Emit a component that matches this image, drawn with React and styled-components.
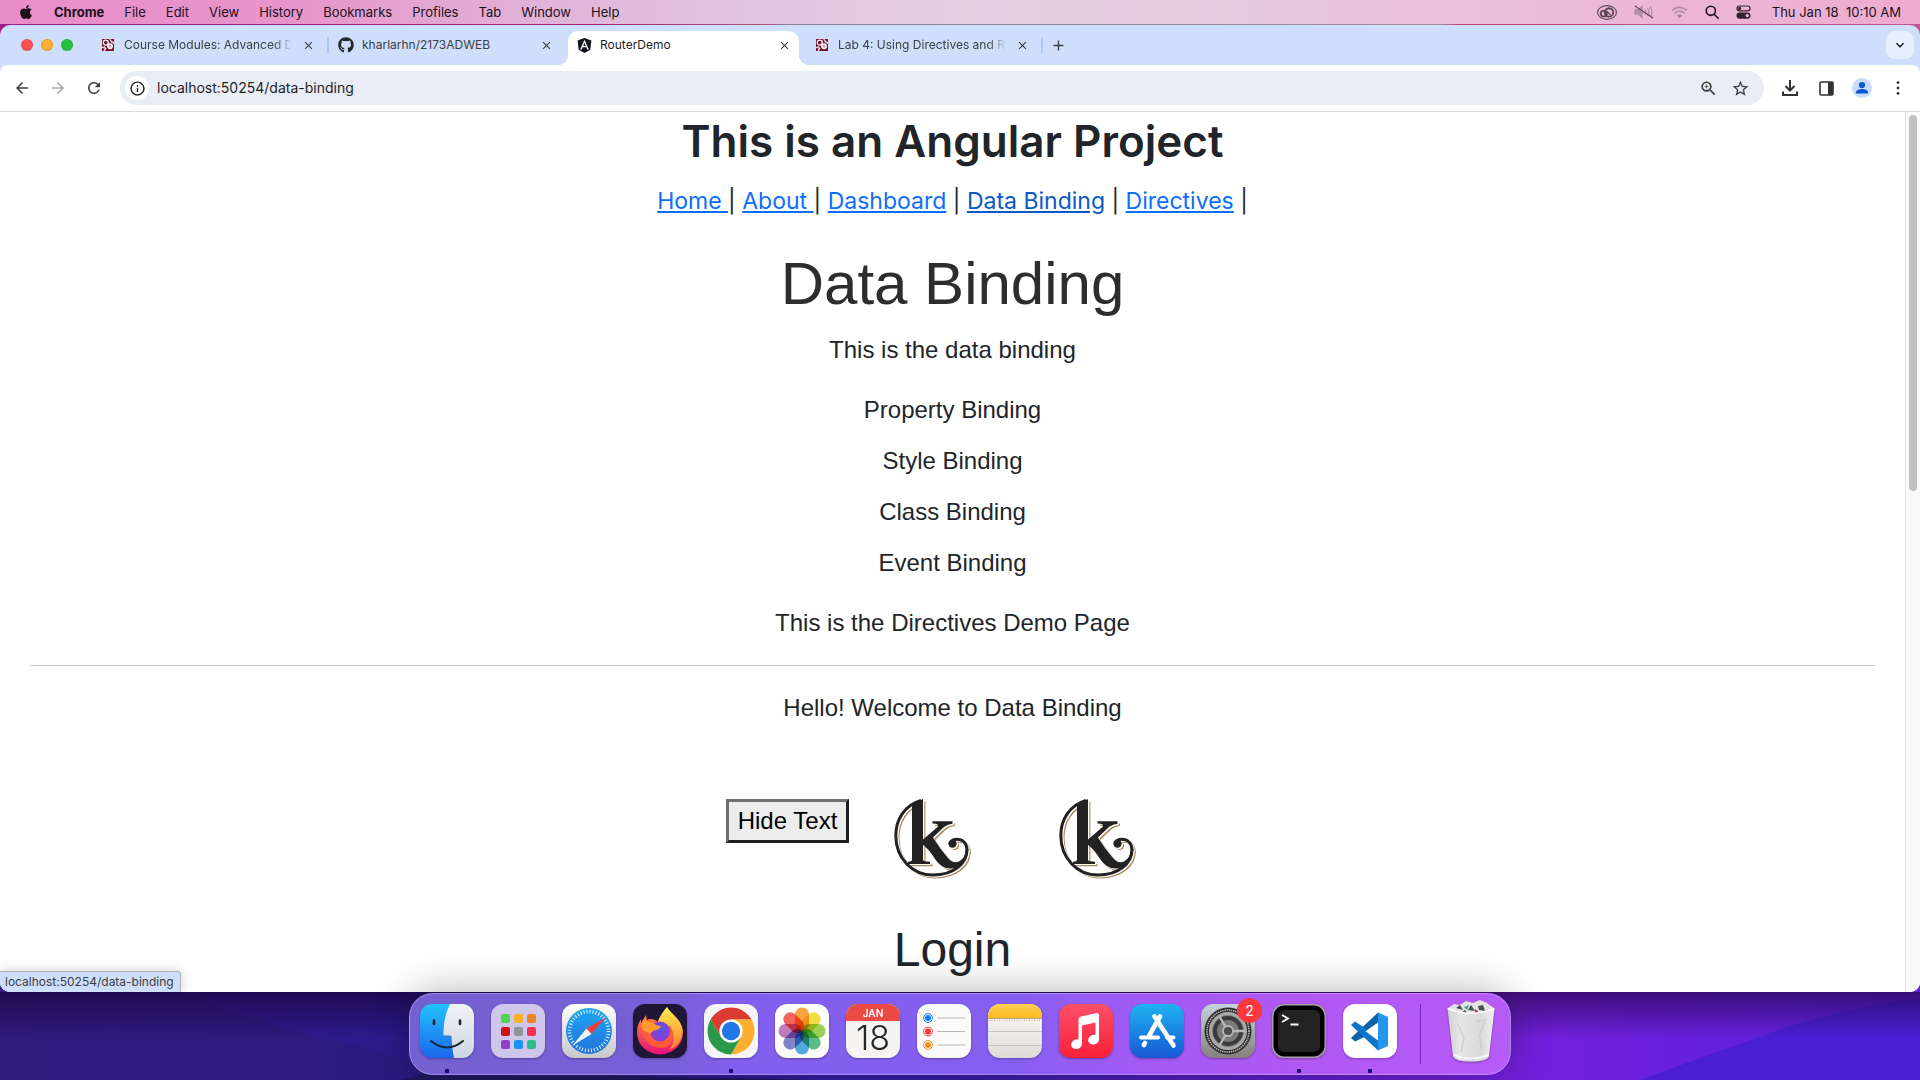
import React from "react";
import styled, { createGlobalStyle, css } from "styled-components";
import { FaApple, FaGithub, FaAngular } from "react-icons/fa";
import {
  MdArrowBack,
  MdArrowForward,
  MdRefresh,
  MdInfoOutline,
  MdStarBorder,
  MdZoomIn,
  MdClose,
  MdAdd,
  MdExpandMore,
} from "react-icons/md";

const ui = `Inter, "Liberation Sans", sans-serif`;
const arial = `"Liberation Sans", Arial, sans-serif`;

const GlobalStyle = createGlobalStyle`
  *, *::before, *::after { box-sizing: border-box; }
  body { margin: 0; font-family: ${ui}; color: #212529; }
  h1, h2, h3, p, ul { margin: 0; padding: 0; font-weight: 400; }
  button, input { font: inherit; color: inherit; border: 0; padding: 0; background: none; }
  svg { display: block; flex: none; }
`;

/* ---------- desktop ---------- */

const Desktop = styled.div`
  position: relative;
  height: 100vh;
  display: flex;
  flex-direction: column;
  overflow: hidden;
  background: linear-gradient(90deg, #9c1f8c 0%, #a3246f 31%, #a85878 40%, #8b8299 41%, #a08ba4 75%, #c2447f 76%, #c2558f 100%);
`;

const Wallpaper = styled.svg`
  position: absolute;
  left: 0;
  bottom: 0;
  width: 100%;
  height: 100px;
`;

/* ---------- menu bar ---------- */

const MenuBar = styled.header`
  position: relative;
  flex: none;
  height: 24px;
  margin-bottom: 1px;
  padding: 0 19px 0 18px;
  display: flex;
  align-items: center;
  justify-content: space-between;
  font-size: 13px;
  line-height: 24px;
  color: #1c1019;
  background: linear-gradient(90deg, #e98dc8 0%, #e695cb 15%, #e0bbdb 32%, #e3d0e3 50%, #e4cbe0 62%, #eabedb 78%, #edabcf 100%);
`;

const MenuGroup = styled.nav`
  display: flex;
  align-items: center;
  gap: 20px;
`;

const MenuButton = styled.button`
  line-height: 24px;
  font-weight: ${(p) => (p.$strong ? 700 : 400)};
`;

const StatusGroup = styled.div`
  display: flex;
  align-items: center;
  gap: 17px;
`;

const Clock = styled.time`
  padding-left: 4px;
  white-space: pre;
`;

/* ---------- browser window ---------- */

const Window = styled.main`
  position: relative;
  flex: 1;
  min-height: 0;
  display: flex;
  flex-direction: column;
  overflow: hidden;
  border-radius: 10px;
  background: #cfdefb;
`;

const TabStrip = styled.div`
  flex: none;
  height: 40px;
  padding: 6px 6px 0 21px;
  display: flex;
  align-items: flex-start;
`;

const Lights = styled.div`
  height: 28px;
  width: 71px;
  display: flex;
  align-items: center;
  gap: 8px;
`;

const Light = styled.button`
  width: 12px;
  height: 12px;
  border-radius: 50%;
  background: ${(p) => p.$color};
  border: 1px solid rgba(0, 0, 0, 0.12);
`;

const Tab = styled.div`
  position: relative;
  width: 231px;
  height: 34px;
  margin-right: 7px;
  padding: 0 7px 6px 8px;
  display: flex;
  align-items: center;
  gap: 8px;
  font-size: 12px;
  color: #3c4043;
  border-radius: 10px 10px 0 0;
  ${(p) =>
    p.$active &&
    css`
      background: #fff;
      color: #1f1f1f;
      &::before,
      &::after {
        content: "";
        position: absolute;
        bottom: 0;
        width: 10px;
        height: 10px;
      }
      &::before {
        right: 100%;
        background: radial-gradient(circle at 0 0, transparent 10px, #fff 10px);
      }
      &::after {
        left: 100%;
        background: radial-gradient(circle at 100% 0, transparent 10px, #fff 10px);
      }
    `}
  ${(p) =>
    p.$divider &&
    css`
      &::after {
        content: "";
        position: absolute;
        right: -6px;
        top: 6px;
        width: 2px;
        height: 16px;
        background: #a8c7fa;
      }
    `}
`;

const TabIcon = styled.span`
  width: 16px;
  display: flex;
  justify-content: center;
`;

const TabTitle = styled.span`
  flex: 1;
  min-width: 0;
  overflow: hidden;
  white-space: nowrap;
  line-height: 28px;
  ${(p) =>
    p.$fade &&
    css`
      mask-image: linear-gradient(90deg, #000 calc(100% - 18px), transparent);
    `}
`;

const IconButton = styled.button`
  width: ${(p) => p.$size}px;
  height: ${(p) => p.$size}px;
  flex: none;
  display: flex;
  align-items: center;
  justify-content: center;
  border-radius: ${(p) => p.$radius || "50%"};
  background: ${(p) => p.$bg || "transparent"};
  color: ${(p) => p.$color || "#3c3c3c"};
`;

const Spacer = styled.div`
  flex: 1;
`;

const Toolbar = styled.div`
  flex: none;
  height: 47px;
  padding: 0 10px;
  display: flex;
  align-items: center;
  background: #fff;
  border-bottom: 1px solid #dcdcdf;
  border-radius: 8px 8px 0 0;
`;

const NavButtons = styled.div`
  display: flex;
  gap: 12px;
  margin-right: 14px;
`;

const Omnibox = styled.form`
  flex: 1;
  height: 34px;
  padding: 0 14px 0 5px;
  display: flex;
  align-items: center;
  gap: 12px;
  border-radius: 17px;
  background: #e9edf6;
`;

const UrlInput = styled.input`
  flex: 1;
  min-width: 0;
  margin-left: -4px;
  font-size: 14px;
  line-height: 20px;
  color: #1f1f1f;
  outline: none;
`;

const Actions = styled.div`
  display: flex;
  gap: 12px;
  margin-left: 14px;
`;

/* ---------- web page ---------- */

const Viewport = styled.div`
  flex: 1;
  min-height: 0;
  display: flex;
  background: #fff;
`;

const Page = styled.div`
  flex: 1;
  min-width: 0;
  overflow: hidden;
  text-align: center;
  font: 24px/36px ${arial};
`;

const Scrollbar = styled.div`
  width: 15px;
  padding: 3px;
  background: #fafafa;
  border-left: 1px solid #e4e4e4;
`;

const Thumb = styled.div`
  width: 8px;
  height: 43%;
  border-radius: 4px;
  background: #c1c1c1;
`;

const SiteTitle = styled.h2`
  margin-bottom: 13px;
  font: 600 44px/58px ${ui};
`;

const SiteNav = styled.nav`
  margin-bottom: 29px;
  font-family: ${ui};
  font-size: 23px;
`;

const SiteLink = styled.a`
  white-space: pre;
  color: ${(p) => (p.$current ? "#0a58ca" : "#0d6efd")};
`;

const PageTitle = styled.h1`
  margin-bottom: 12px;
  font-size: 60px;
  line-height: 72px;
  color: #2d2d2d;
`;

const Paragraph = styled.p`
  margin-bottom: 24px;
`;

const Topics = styled.ul`
  list-style: none;
  display: flex;
  flex-direction: column;
  gap: 15px;
  margin-bottom: 24px;
`;

const Rule = styled.hr`
  margin: 0 30px 24px;
  border: 0;
  border-top: 1px solid #c8c9ca;
`;

const DemoRow = styled.div`
  display: flex;
  justify-content: center;
  align-items: flex-start;
  padding-top: 49px;
  margin-bottom: 42px;
`;

const HideButton = styled.button`
  padding: 1px 9px;
  font: 24px/36px ${arial};
  color: #000;
  background: #ededed;
  border: 3px solid;
  border-color: #6f6f6f #1e1e1e #1e1e1e #6f6f6f;
`;

const LogoBox = styled.div`
  margin: 0 44px;
`;

const LoginTitle = styled.h2`
  font-size: 48px;
  line-height: 58px;
`;

const StatusBubble = styled.div`
  position: absolute;
  left: 0;
  bottom: 0;
  padding: 0 6px 0 5px;
  font-size: 12px;
  line-height: 20px;
  color: #3c4043;
  background: #cfdefb;
  border: 1px solid #b0b3b8;
  border-width: 1px 1px 0 0;
  border-radius: 0 4px 0 0;
  box-shadow: 0 0 12px rgba(0, 0, 0, 0.2);
`;

/* ---------- dock ---------- */

const Dock = styled.nav`
  position: relative;
  flex: none;
  align-self: center;
  height: 82px;
  margin: 1px 0 5px;
  padding: 10px 12px 0 10px;
  display: flex;
  gap: 17px;
  border: 1px solid rgba(255, 255, 255, 0.28);
  border-radius: 24px;
  background: linear-gradient(95deg, #7460d0 0%, #7760d8 24%, #825fee 30%, #855ff0 55%, #a15af5 66%, #b158f3 80%, #b65af8 100%);
  box-shadow: 0 0 40px rgba(0, 0, 0, 0.32);
`;

const DockItem = styled.button`
  position: relative;
  width: 54px;
  height: 70px;
  ${(p) =>
    p.$running &&
    css`
      &::after {
        content: "";
        position: absolute;
        left: 25px;
        bottom: 1px;
        width: 4px;
        height: 4px;
        border-radius: 1px;
        background: #1b0070;
      }
    `}
  svg {
    margin-bottom: 16px;
    filter: drop-shadow(0 1px 1px rgba(0, 0, 0, 0.3));
  }
`;

const Badge = styled.span`
  position: absolute;
  top: -6px;
  right: -7px;
  width: 25px;
  height: 25px;
  border-radius: 50%;
  background: #fc373d;
  color: #fff;
  font-size: 14px;
  line-height: 25px;
  text-align: center;
`;

const DockDivider = styled.div`
  width: 1px;
  height: 60px;
  margin: 0 6px;
  background: #7b27c2;
`;

/* ---------- drawings ---------- */

const CourseIcon = () => (
  <svg width="12" height="12" viewBox="0 0 12 12">
    <rect width="12" height="12" fill="#7b0f30" />
    <circle cx="3.800" cy="3.600" r="2.500" fill="none" stroke="#fff" strokeWidth="1.300" />
    <circle cx="8" cy="7.200" r="2.300" fill="#d9a9b5" stroke="#fff" strokeWidth="1.300" />
    <path d="M7 0H12V5L9.500 4zM0 8L2.500 7L4.500 9.500L3 12H1.500L2.500 9.500L0 9z" fill="#fff" opacity=".8" />
    <path d="M8.500 0H12V3L10 2z" fill="#7b0f30" />
  </svg>
);

const CloudIcon = () => (
  <svg width="20" height="15" viewBox="0 0 20 15" fill="none" stroke="#5a4653">
    <ellipse cx="10" cy="7.500" rx="9.400" ry="6.900" strokeWidth="1.100" />
    <circle cx="6.800" cy="8.600" r="3" strokeWidth="1.900" />
    <circle cx="12" cy="7.400" r="4.200" strokeWidth="1.900" />
    <path d="M8 6.500q2-.5 3.500 1.500l2 1.700" strokeWidth="1.500" />
  </svg>
);

const MutedIcon = () => (
  <svg width="20" height="14" viewBox="0 0 20 14" fill="none" stroke="#b78fa8" strokeWidth="1.400">
    <path d="M1 5h3l4-3.500v11L4 9H1z" fill="#b78fa8" />
    <path d="M11 4.500q2 2.500 0 5M13.500 3q3 4 0 8M16 1.500q4 5.500 0 11" />
    <path d="M1 1l18 12" stroke="#5c4554" strokeWidth="1.200" />
  </svg>
);

const WifiIcon = () => (
  <svg width="17" height="13" viewBox="0 0 17 13" fill="none" stroke="#b88fa9" strokeWidth="1.800">
    <path d="M1 4.500q7.500-6.500 15 0M3.500 7.300q5-4.300 10 0" />
    <path d="M6 9.600q2.500-2 5 0L8.500 12.300z" fill="#a17c94" stroke="none" />
  </svg>
);

const SpotlightIcon = () => (
  <svg width="14" height="14" viewBox="0 0 14 14" fill="none" stroke="#1c1019" strokeWidth="1.600">
    <circle cx="5.800" cy="5.800" r="4.600" />
    <path d="M9.200 9.200l4 4" strokeLinecap="round" />
  </svg>
);

const ControlIcon = () => (
  <svg width="15" height="14" viewBox="0 0 15 14">
    <rect x="1" y="1" width="13" height="4.800" rx="2.400" fill="none" stroke="#33222e" strokeWidth="1.200" />
    <circle cx="3.600" cy="3.400" r="1.600" fill="#33222e" />
    <rect x=".5" y="7.500" width="14" height="6.200" rx="3.100" fill="#33222e" />
    <circle cx="11.300" cy="10.600" r="1.700" fill="#eab8d6" />
  </svg>
);

const DownloadIcon = () => (
  <svg width="16" height="16" viewBox="0 0 16 16" fill="none" stroke="#333" strokeWidth="2">
    <path d="M8 0v10M3.500 6L8 10.500 12.500 6M1 11.500V15h14v-3.500" />
  </svg>
);

const PanelIcon = () => (
  <svg width="15" height="15" viewBox="0 0 15 15">
    <rect x="1" y="1" width="13" height="13" rx="1" fill="none" stroke="#333" strokeWidth="1.600" />
    <rect x="9" y="1" width="5" height="13" fill="#333" />
  </svg>
);

const AvatarIcon = () => (
  <svg width="20" height="20" viewBox="0 0 20 20" fill="#0b57d0">
    <circle cx="10" cy="7" r="3.100" />
    <path d="M4 15.500v-1.300C4 12 7.800 11 10 11s6 1 6 3.200v1.300z" />
  </svg>
);

const DotsIcon = () => (
  <svg width="4" height="14" viewBox="0 0 4 14" fill="#333">
    <circle cx="2" cy="1.600" r="1.400" />
    <circle cx="2" cy="7" r="1.400" />
    <circle cx="2" cy="12.400" r="1.400" />
  </svg>
);

const MonogramShape = ({ color, width }) => (
  <g fill={color} stroke="none">
    <path
      d="M27 1.500C10 6.500 1.800 21 1.800 36.500C1.800 59 18 76 39 76C60 76 73 64 73 51C73 44 68.500 40.200 62.500 40.300C59 40.600 57 42 57 44"
      fill="none"
      stroke={color}
      strokeWidth={width}
    />
    <circle cx="58.500" cy="44.600" r="4.200" />
    <path d="M18 5.500L29 0V61Q29.500 62.700 36 62.700V65H14V62.700Q18 62.700 18 60.500z" />
    <path d="M38.500 22.200H58.500V24.800Q54 25 50 28L39 38.500Q46 50 54 59Q59 65 65 62.500Q71.500 59 71.800 50L74.500 50Q73.500 63 61 69Q49 72 41 60Q35 50 28.500 45.500V41L43.500 28Q46 25 38.500 24.600z" />
  </g>
);

const KLogo = () => (
  <svg width="77" height="80" viewBox="-1 0 77 80" role="img" aria-label="k logo" overflow="visible">
    <g transform="translate(2.400 2.200)">
      <MonogramShape color="#a58a5c" width={2.600} />
    </g>
    <g transform="translate(1.300 1.100)">
      <MonogramShape color="#fff" width={2.800} />
    </g>
    <MonogramShape color="#222" width={3} />
  </svg>
);

const Tile = ({ fill, children }) => (
  <svg width="54" height="54" viewBox="0 0 54 54">
    <rect width="54" height="54" rx="12" fill={fill} />
    {children}
  </svg>
);

const Gradient = ({ id, from, to }) => (
  <linearGradient id={id} x1="0" y1="0" x2="0" y2="1">
    <stop offset="0" stopColor={from} />
    <stop offset="1" stopColor={to} />
  </linearGradient>
);

const FinderIcon = () => (
  <Tile fill="url(#finder)">
    <defs>
      <Gradient id="finder" from="#22c3fb" to="#1b66ee" />
      <Gradient id="finderFace" from="#f3f3f6" to="#ccd6e2" />
    </defs>
    <path d="M30 0H42a12 12 0 0 1 12 12V42a12 12 0 0 1-12 12H34Q32 45 31.500 32H23.500Q23 14 30 0z" fill="url(#finderFace)" />
    <g fill="none" stroke="#1b2433" strokeLinecap="round">
      <path d="M14 16.500v3.500M40 16.500v3.500" strokeWidth="2.600" />
      <path d="M11 37Q27 50 43 37" strokeWidth="2" />
      <path d="M30.500 32h-7" strokeWidth="1" stroke="#56718e" />
    </g>
  </Tile>
);

const LaunchpadIcon = () => (
  <Tile fill="#cfc6ec">
    {["#4fd64a", "#fbb023", "#f28322", "#cf1414", "#8d9699", "#fb3250", "#9042c9", "#1a93f5", "#2bbd90"].map((c, i) => (
      <rect key={c} x={10 + (i % 3) * 13} y={10 + Math.floor(i / 3) * 13} width="9" height="9" rx="2" fill={c} />
    ))}
  </Tile>
);

const SafariIcon = () => (
  <Tile fill="url(#safari)">
    <defs>
      <Gradient id="safari" from="#ffffff" to="#c9c9cc" />
      <Gradient id="safariDial" from="#1ea6f2" to="#2273dc" />
    </defs>
    <circle cx="27" cy="27" r="23" fill="url(#safariDial)" />
    <circle cx="27" cy="27" r="19.500" fill="none" stroke="#fff" strokeWidth="3.600" strokeDasharray="0.900 2.163" />
    <path d="M43.500 13.500L29.500 30L24.500 24.500z" fill="#f33b36" />
    <path d="M10.500 41.500L24.500 24.500L29.500 30z" fill="#f4f4f4" />
  </Tile>
);

const FirefoxIcon = () => (
  <Tile fill="#1f1635">
    <defs>
      <Gradient id="foxBody" from="#ff9a2e" to="#e8127c" />
      <Gradient id="foxTail" from="#fff04f" to="#ff7a2d" />
      <radialGradient id="foxGlobe" cx=".6" cy=".4" r=".7">
        <stop offset="0" stopColor="#5a54e8" />
        <stop offset="1" stopColor="#9b36c9" />
      </radialGradient>
    </defs>
    <path d="M34 3C37 10 49 14 50 28C50 41 40 50 27 50.500C14 50 4 41 4 28C4 22 6 18 8 15L8 19L13 11L14 16C17 14 22 15 25 18C27 12 30 8 34 3z" fill="url(#foxBody)" />
    <path d="M34 3C38 10 48 15 49.500 26C50 36 44 43 36 46C43 38 40 29 37 24C33 17 26 20 25 17C27 12 30 8 34 3z" fill="url(#foxTail)" />
    <path d="M13 16C18 15 20 20 27 22L37 22C43 30 40 42 30 44C16 45 8 32 9 24z" fill="#ff5a3a" />
    <circle cx="27" cy="27.500" r="10" fill="url(#foxGlobe)" />
    <path d="M8 22L11 15L14 17L19 18Q23 22 28 22C27 26 22 26 20 27Q18 29 17 30L10 26z" fill="#ff9b2c" />
  </Tile>
);

const ChromeIcon = () => (
  <Tile fill="#f5f4fb">
    <path d="M27 15.300H47.400A23.500 23.500 0 0 1 27 50.500L37 33z" fill="#fcb02d" />
    <path d="M27 27L6.700 15.300A23.500 23.500 0 0 1 47.400 15.300H27z" fill="#dd3b31" />
    <path d="M6.700 15.300L17 33L27 37L37 33L27 50.500A23.500 23.500 0 0 1 6.700 15.300z" fill="#2b9a48" />
    <path d="M6.700 15.300H27L17 33z" fill="#dd3b31" />
    <circle cx="27" cy="27" r="11.600" fill="#fff" />
    <circle cx="27" cy="27" r="9.200" fill="#2376e5" />
  </Tile>
);

const PhotosIcon = () => (
  <Tile fill="#fcfcfc">
    {["#fb9a28", "#f0dc2c", "#8fcc3f", "#44b878", "#3d9ede", "#7176c4", "#bb6bb2", "#f5504a"].map((c, i) => (
      <rect
        key={c}
        x="20"
        y="3.500"
        width="14"
        height="23.500"
        rx="7"
        fill={c}
        opacity=".88"
        transform={`rotate(${i * 45} 27 27)`}
        style={{ mixBlendMode: "multiply" }}
      />
    ))}
  </Tile>
);

const CalendarIcon = () => (
  <Tile fill="#f5f4f3">
    <path d="M0 17V12A12 12 0 0 1 12 0H42A12 12 0 0 1 54 12V17z" fill="#ee4a45" />
    <text x="27" y="13" textAnchor="middle" fontFamily={ui} fontSize="10" fontWeight="600" fill="#fff">
      JAN
    </text>
    <text x="27" y="46" textAnchor="middle" fontFamily={ui} fontSize="34" fontWeight="300" fill="#262626">
      18
    </text>
  </Tile>
);

const RemindersIcon = () => (
  <Tile fill="#fafafa">
    {["#1481f5", "#f23b38", "#f58f26"].map((c, i) => (
      <g key={c}>
        <circle cx="11" cy={14 + i * 13.500} r="4.400" fill="none" stroke={c} strokeWidth="1" />
        <circle cx="11" cy={14 + i * 13.500} r="3" fill={c} />
        <path d={`M20.500 ${14 + i * 13.500}H48`} stroke="#b5b5ba" strokeWidth="1" />
      </g>
    ))}
  </Tile>
);

const NotesIcon = () => (
  <Tile fill="url(#notes)">
    <defs>
      <Gradient id="notes" from="#fdfdfd" to="#dfdad8" />
      <Gradient id="notesTop" from="#fdd054" to="#fcbb20" />
    </defs>
    <path d="M0 14V12A12 12 0 0 1 12 0H42A12 12 0 0 1 54 12V14z" fill="url(#notesTop)" />
    <path d="M0 14.500H54" stroke="#b5a27a" strokeWidth="1" />
    <path d="M1 16.500H53" stroke="#aaa" strokeWidth="1" strokeDasharray="1 1.500" />
    <path d="M0 27.500H54M0 41.500H54" stroke="#c6c3c2" strokeWidth="1" />
  </Tile>
);

const MusicIcon = () => (
  <Tile fill="url(#music)">
    <defs>
      <Gradient id="music" from="#fb5068" to="#f92038" />
    </defs>
    <path d="M19.500 15.500Q19.500 13 22 12.400L38 9Q40 8.800 40 11V35.500A5.500 4.800 -20 1 1 36.500 31V18.500L23 21.500V40A5.500 4.800 -20 1 1 19.500 35.500z" fill="#fff" />
  </Tile>
);

const AppStoreIcon = () => (
  <Tile fill="url(#appstore)">
    <defs>
      <Gradient id="appstore" from="#1eb3f0" to="#1857d5" />
    </defs>
    <g stroke="#fff" strokeWidth="4.600" strokeLinecap="round" fill="none">
      <path d="M30 12.500L19 32M24.500 12.500L43.500 41.500M15 39L13.800 41" />
      <path d="M11 33.500H28M37 33.500H43.500" strokeWidth="4" />
    </g>
  </Tile>
);

const SettingsIcon = () => (
  <Tile fill="url(#settings)">
    <defs>
      <Gradient id="settings" from="#c5d3da" to="#85807d" />
    </defs>
    <circle cx="27" cy="27" r="23.500" fill="#2f2f2f" />
    <circle cx="27" cy="27" r="21" fill="none" stroke="#b4b4b4" strokeWidth="1.600" strokeDasharray="1.400 .8" />
    <circle cx="27" cy="27" r="17.500" fill="#7a7a7a" stroke="#a9a9a9" strokeWidth="3" />
    <circle cx="27" cy="27" r="13" fill="none" stroke="#3a3a3a" strokeWidth="4" />
    <path d="M27 27H44M27 27L18.500 12.500M27 27L18.500 41.500" stroke="#b7b7b7" strokeWidth="2.400" />
    <circle cx="27" cy="27" r="5" fill="#4c4c4c" stroke="#b7b7b7" strokeWidth="1.800" />
  </Tile>
);

const TerminalIcon = () => (
  <Tile fill="#a3a3a6">
    <rect x="1.500" y="1.500" width="51" height="51" rx="11" fill="#000" />
    <rect x="6" y="6" width="42" height="42" rx="6" fill="#232323" />
    <path d="M10 11L16 14.500L10 18M18.500 20.500H26.500" fill="none" stroke="#fff" strokeWidth="1.800" />
  </Tile>
);

const VsCodeIcon = () => (
  <Tile fill="#fff">
    <path d="M35 8.500L40 12V24L12 37.500L8 34z" fill="#0d62a8" />
    <path d="M12 17.500L8 21L35 46.500L40 41V36z" fill="#0e76c8" />
    <path d="M35 18.500L22.500 27.200L35 36.500z" fill="#fff" />
    <path d="M35 8.500L45 13V42L35 46.500z" fill="#2496ee" />
  </Tile>
);

const TrashIcon = () => (
  <svg width="54" height="60" viewBox="0 0 54 60" overflow="visible">
    <defs>
      <linearGradient id="bin" x1="0" x2="1">
        <stop offset="0" stopColor="#cfcfd1" />
        <stop offset=".25" stopColor="#e6e6e6" />
        <stop offset=".7" stopColor="#dadada" />
        <stop offset="1" stopColor="#f0f0f0" />
      </linearGradient>
    </defs>
    <path d="M4 4L10 0L16 1L22-3L29-1L36-4L43-1L50 4L46 12H8z" fill="#e2e2e0" />
    <path d="M12 4L16 1L19 6zM24 6L27 1L31 7zM34 2L39 1L41 7L35 6zM17 9L21 6L24 10zM29 9L33 7L36 10z" fill="#4a4d50" />
    <path d="M20 3L25 1L23 6z" fill="#38a8a0" />
    <path d="M31 5L34 7L31 9z" fill="#c0392b" />
    <path d="M3.500 4.500Q27 14 50.500 4.500L45 52Q43 57.500 27 57.500Q11 57.500 9 52z" fill="url(#bin)" />
    <path d="M3.500 4.500Q27 14 50.500 4.500" fill="none" stroke="#fff" strokeWidth="1.400" />
    <path d="M14 20L20 34L17 48M32 18L42 15L35 32L38 46" fill="none" stroke="#cdcdcd" strokeWidth="1.400" />
    <path d="M10 51Q27 58 44 51" fill="none" stroke="#fff" strokeWidth="2" opacity=".7" />
  </svg>
);

/* ---------- data ---------- */

const menus = ["File", "Edit", "View", "History", "Bookmarks", "Profiles", "Tab", "Window", "Help"];

const tabs = [
  { title: "Course Modules: Advanced D", icon: <CourseIcon />, fade: true, divider: true },
  { title: "kharlarhn/2173ADWEB", icon: <FaGithub size={16} color="#24292f" /> },
  { title: "RouterDemo", icon: <FaAngular size={17} color="#10151c" />, active: true },
  { title: "Lab 4: Using Directives and R", icon: <CourseIcon />, fade: true, divider: true },
];

const siteLinks = [
  { label: "Home " },
  { label: "About " },
  { label: "Dashboard", after: " " },
  { label: "Data Binding", after: " ", current: true },
  { label: "Directives", after: " " },
];

const topics = ["Property Binding", "Style Binding", "Class Binding", "Event Binding"];

const dockApps = [
  { name: "Finder", Icon: FinderIcon, running: true },
  { name: "Launchpad", Icon: LaunchpadIcon },
  { name: "Safari", Icon: SafariIcon },
  { name: "Firefox", Icon: FirefoxIcon },
  { name: "Google Chrome", Icon: ChromeIcon, running: true },
  { name: "Photos", Icon: PhotosIcon },
  { name: "Calendar", Icon: CalendarIcon },
  { name: "Reminders", Icon: RemindersIcon },
  { name: "Notes", Icon: NotesIcon },
  { name: "Music", Icon: MusicIcon },
  { name: "App Store", Icon: AppStoreIcon },
  { name: "System Settings", Icon: SettingsIcon, badge: 2 },
  { name: "Terminal", Icon: TerminalIcon, running: true },
  { name: "Visual Studio Code", Icon: VsCodeIcon, running: true },
];

export default function App() {
  return (
    <Desktop>
      <GlobalStyle />
      <Wallpaper viewBox="0 0 1920 100" preserveAspectRatio="none" aria-hidden="true">
        <defs>
          <linearGradient id="wall" x1="0" x2="1">
            <stop offset="0" stopColor="#351a88" />
            <stop offset=".21" stopColor="#2b1a8c" />
            <stop offset=".5" stopColor="#3a1ca6" />
            <stop offset=".78" stopColor="#7320dc" />
            <stop offset="1" stopColor="#5a20dc" />
          </linearGradient>
          <Gradient id="wallShade" from="rgba(20,0,40,.55)" to="rgba(20,0,40,0)" />
        </defs>
        <rect width="1920" height="100" fill="url(#wall)" />
        <path d="M0 12H180Q240 38 340 62T430 100H0z" fill="#2c1a76" opacity=".6" />
        <path d="M430 92Q640 96 815 100H400z" fill="#20185f" />
        <path d="M1640 100Q1700 78 1770 53T1920 18V100z" fill="#4a1fd4" />
        <rect y="12" width="1920" height="46" fill="url(#wallShade)" />
      </Wallpaper>

      <MenuBar>
        <MenuGroup aria-label="Menu bar">
          <FaApple size={16} />
          <MenuButton $strong>Chrome</MenuButton>
          {menus.map((m) => (
            <MenuButton key={m}>{m}</MenuButton>
          ))}
        </MenuGroup>
        <StatusGroup>
          <CloudIcon />
          <MutedIcon />
          <WifiIcon />
          <SpotlightIcon />
          <ControlIcon />
          <Clock>{"Thu Jan 18  10:10 AM"}</Clock>
        </StatusGroup>
      </MenuBar>

      <Window>
        <TabStrip>
          <Lights>
            <Light $color="#ff5150" aria-label="Close window" />
            <Light $color="#feb02f" aria-label="Minimise window" />
            <Light $color="#27c13f" aria-label="Zoom window" />
          </Lights>
          {tabs.map((t) => (
            <Tab key={t.title} $active={t.active} $divider={t.divider}>
              <TabIcon>{t.icon}</TabIcon>
              <TabTitle $fade={t.fade}>{t.title}</TabTitle>
              <IconButton $size={16} aria-label="Close tab">
                <MdClose size={13} />
              </IconButton>
            </Tab>
          ))}
          <IconButton $size={28} aria-label="New tab">
            <MdAdd size={17} />
          </IconButton>
          <Spacer />
          <IconButton $size={28} $radius="9px" $bg="#e8f0fd" $color="#111" aria-label="Search tabs">
            <MdExpandMore size={16} />
          </IconButton>
        </TabStrip>

        <Toolbar>
          <NavButtons>
            <IconButton $size={24} aria-label="Back">
              <MdArrowBack size={18} />
            </IconButton>
            <IconButton $size={24} $color="#a9a9ab" aria-label="Forward">
              <MdArrowForward size={18} />
            </IconButton>
            <IconButton $size={24} aria-label="Reload">
              <MdRefresh size={18} />
            </IconButton>
          </NavButtons>
          <Omnibox>
            <IconButton type="button" $size={24} $bg="#fff" $color="#1f1f1f" aria-label="Site information">
              <MdInfoOutline size={17} />
            </IconButton>
            <UrlInput aria-label="Address" defaultValue="localhost:50254/data-binding" />
            <IconButton type="button" $size={20} aria-label="Zoom level">
              <MdZoomIn size={19} />
            </IconButton>
            <IconButton type="button" $size={20} aria-label="Bookmark this tab">
              <MdStarBorder size={19} />
            </IconButton>
          </Omnibox>
          <Actions>
            <IconButton $size={24} aria-label="Downloads">
              <DownloadIcon />
            </IconButton>
            <IconButton $size={24} aria-label="Side panel">
              <PanelIcon />
            </IconButton>
            <IconButton $size={24} aria-label="Profile">
              <IconButton as="span" $size={20} $bg="#c9dcfb">
                <AvatarIcon />
              </IconButton>
            </IconButton>
            <IconButton $size={24} aria-label="More">
              <DotsIcon />
            </IconButton>
          </Actions>
        </Toolbar>

        <Viewport>
          <Page>
            <SiteTitle>This is an Angular Project</SiteTitle>
            <SiteNav>
              {siteLinks.map((l) => (
                <React.Fragment key={l.label}>
                  <SiteLink href="#" $current={l.current}>
                    {l.label}
                  </SiteLink>
                  {l.after}
                  {"| "}
                </React.Fragment>
              ))}
            </SiteNav>
            <PageTitle>Data Binding</PageTitle>
            <Paragraph>This is the data binding</Paragraph>
            <Topics>
              {topics.map((t) => (
                <li key={t}>{t}</li>
              ))}
            </Topics>
            <Paragraph>This is the Directives Demo Page</Paragraph>
            <Rule />
            <Paragraph>Hello! Welcome to Data Binding</Paragraph>
            <DemoRow>
              <HideButton>Hide Text</HideButton>
              <LogoBox>
                <KLogo />
              </LogoBox>
              <LogoBox>
                <KLogo />
              </LogoBox>
            </DemoRow>
            <LoginTitle>Login</LoginTitle>
          </Page>
          <Scrollbar>
            <Thumb />
          </Scrollbar>
        </Viewport>
        <StatusBubble>localhost:50254/data-binding</StatusBubble>
      </Window>

      <Dock aria-label="Dock">
        {dockApps.map(({ name, Icon, running, badge }) => (
          <DockItem key={name} $running={running} aria-label={name}>
            <Icon />
            {badge && <Badge>{badge}</Badge>}
          </DockItem>
        ))}
        <DockDivider />
        <DockItem aria-label="Trash">
          <TrashIcon />
        </DockItem>
      </Dock>
    </Desktop>
  );
}
